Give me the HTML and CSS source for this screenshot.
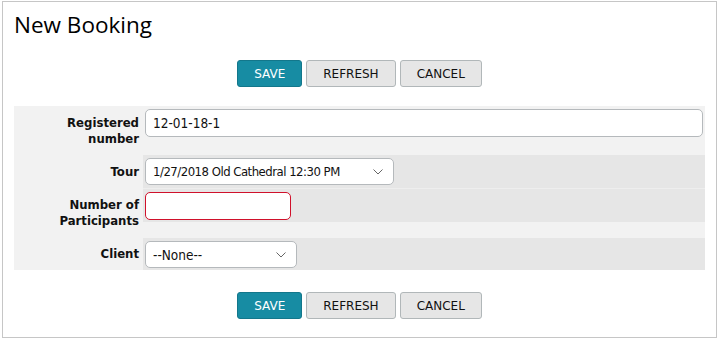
FILE: index.html
```html
<!DOCTYPE html>
<html lang="en">
<head>
  <meta charset="UTF-8" />
  <meta name="viewport" content="width=device-width, initial-scale=1.0"/>
  <title>New Booking</title>
  <link rel="stylesheet" href="styles.css">
</head>
<body>
  <div class="panel">
    <h1 class="title">New Booking</h1>

    <div class="actions">
      <button class="btn btn-primary">SAVE</button>
      <button class="btn">REFRESH</button>
      <button class="btn">CANCEL</button>
    </div>

    <!-- FORM -->
    <div class="form">
      <div class="form-row">
        <label class="form-label">Registered number</label>
        <div class="form-cell">
          <div class="field light">
            <input type="text" class="text-input wide" value="12-01-18-1">
          </div>
          <div class="field-note"></div>
        </div>
      </div>

      <div class="form-row">
        <label class="form-label">Tour</label>
        <div class="form-cell">
          <div class="field">
            <span class="select-wrap">
              <select class="select tour">
                <option>1/27/2018 Old Cathedral 12:30 PM</option>
              </select>
              <svg class="chevron" width="10" height="6" viewBox="0 0 10 6"><path d="M0.5 0.5 L5 5 L9.5 0.5" fill="none" stroke="#666" stroke-width="1"/></svg>
            </span>
          </div>
        </div>
      </div>

      <div class="form-row">
        <label class="form-label">Number of Participants</label>
        <div class="form-cell sep">
          <div class="field">
            <input type="text" class="text-input invalid" value="">
          </div>
          <div class="field-note"></div>
        </div>
      </div>

      <div class="form-row">
        <label class="form-label">Client</label>
        <div class="form-cell">
          <div class="field last">
            <span class="select-wrap">
              <select class="select client">
                <option>--None--</option>
              </select>
              <svg class="chevron" width="10" height="6" viewBox="0 0 10 6"><path d="M0.5 0.5 L5 5 L9.5 0.5" fill="none" stroke="#666" stroke-width="1"/></svg>
            </span>
          </div>
        </div>
      </div>
    </div>

    <div class="actions">
      <button class="btn btn-primary">SAVE</button>
      <button class="btn">REFRESH</button>
      <button class="btn">CANCEL</button>
    </div>
  </div>
</body>
</html>
```

FILE: styles.css
```css
html, body {
  margin: 0;
  padding: 0;
  background: #fff;
}
.panel {
  margin: 1px 2px 0 2px;
  border: 1px solid #c6c6c6;
  padding: 8px 11px 18px 11px;
  font-family: "DejaVu Sans Condensed", "DejaVu Sans", sans-serif;
  font-stretch: condensed;
  color: #111;
}
.title {
  margin: 0;
  font-family: "Open Sans", "Noto Sans", sans-serif;
  font-stretch: normal;
  font-weight: 400;
  font-size: 22.5px;
  line-height: 30px;
  color: #000;
}
/* -- BUTTONS -- */
.actions {
  display: flex;
  justify-content: center;
  gap: 4px;
  margin-top: 20px;
}
.btn {
  height: 27px;
  padding: 0 16px;
  border: 1px solid #b1b7b9;
  border-radius: 3px;
  background: #e6e6e6;
  font-family: "DejaVu Sans", sans-serif;
  font-stretch: normal;
  font-size: 12px;
  color: #111;
  cursor: pointer;
}
.btn-primary {
  background: #178ca3;
  border-color: #13778b;
  color: #fff;
}
/* -- FORM -- */
.form {
  margin: 19px 0 22px 0;
}
.form-row {
  display: grid;
  grid-template-columns: 129px 1fr;
}
.form-label {
  background: #f2f2f2;
  display: flex;
  align-items: center;
  justify-content: flex-end;
  text-align: right;
  padding-right: 4px;
  font-weight: bold;
  font-size: 13px;
  line-height: 16px;
}
.form-cell.sep {
  border-top: 1px solid #eeeeee;
}
.field {
  box-sizing: border-box;
  height: 33px;
  padding: 3px 2px 2px 2px;
  background: #e6e6e6;
}
.field.light { background: #f2f2f2; }
.field.last { height: 32px; }
.field-note {
  height: 16px;
  background: #f2f2f2;
}
.text-input {
  box-sizing: border-box;
  height: 28px;
  border: 1px solid #b5b9bc;
  border-radius: 5px;
  padding: 0 7px;
  background: #fff;
  font-family: inherit;
  font-stretch: condensed;
  font-size: 13.5px;
  color: #111;
  outline: none;
}
.text-input.wide { width: 100%; }
.text-input.invalid {
  width: 146px;
  border-color: #d0112b;
}
.select-wrap {
  position: relative;
  display: inline-block;
}
.select {
  appearance: none;
  -webkit-appearance: none;
  box-sizing: border-box;
  height: 27px;
  border: 1px solid #b5b9bc;
  border-radius: 5px;
  padding: 0 7px;
  background: #fff;
  font-family: inherit;
  font-stretch: condensed;
  font-size: 13.5px;
  color: #111;
  outline: none;
}
.select.tour { width: 249px; font-size: 13px; letter-spacing: -0.5px; }
.select.client { width: 152px; }
.chevron {
  position: absolute;
  right: 11px;
  top: 11px;
  pointer-events: none;
}
```
